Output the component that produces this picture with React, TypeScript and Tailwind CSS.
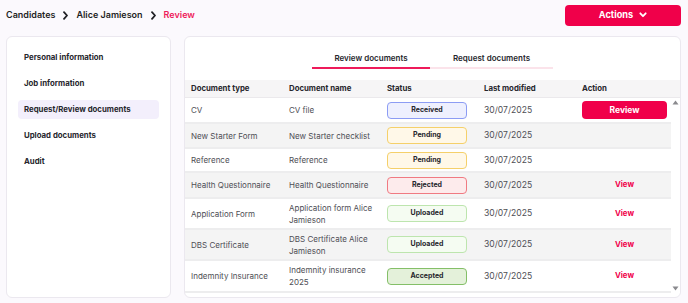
import React from 'react';

type Status = 'Received' | 'Pending' | 'Rejected' | 'Uploaded' | 'Accepted';

const statusStyles: Record<Status, string> = {
  Received: 'bg-[#eef0fe] border-[#8c9cf4]',
  Pending: 'bg-[#fff8e8] border-[#f5d06a]',
  Rejected: 'bg-[#fdebec] border-[#f07a82]',
  Uploaded: 'bg-[#f5fcf2] border-[#bde5ae]',
  Accepted: 'bg-[#e4f1da] border-[#84bf68]',
};

const rows: { type: string; name: string; status: Status; action: 'review' | 'view' | null; h: string; alt: boolean }[] = [
  { type: 'CV', name: 'CV file', status: 'Received', action: 'review', h: 'h-[26px]', alt: false },
  { type: 'New Starter Form', name: 'New Starter checklist', status: 'Pending', action: null, h: 'h-[25px]', alt: true },
  { type: 'Reference', name: 'Reference', status: 'Pending', action: null, h: 'h-[24px]', alt: false },
  { type: 'Health Questionnaire', name: 'Health Questionnaire', status: 'Rejected', action: 'view', h: 'h-[26px]', alt: true },
  { type: 'Application Form', name: 'Application form Alice Jamieson', status: 'Uploaded', action: 'view', h: 'h-[31px]', alt: false },
  { type: 'DBS Certificate', name: 'DBS Certificate Alice Jamieson', status: 'Uploaded', action: 'view', h: 'h-[31px]', alt: true },
  { type: 'Indemnity Insurance', name: 'Indemnity insurance 2025', status: 'Accepted', action: 'view', h: 'h-[32px]', alt: false },
];

const menu = ['Personal information', 'Job information', 'Request/Review documents', 'Upload documents', 'Audit'];

const Chevron = () => (
  <svg width="7" height="9" viewBox="0 0 7 9" className="mx-[7px]">
    <path d="M2 1.2 L5 4.5 L2 7.8" stroke="#1f1f24" strokeWidth="1.8" fill="none" strokeLinecap="round" strokeLinejoin="round" />
  </svg>
);

const App: React.FC = () => {
  return (
    <div className="w-[688px] h-[303px] overflow-hidden bg-[#fbf9fd] text-[#2a2a30]" style={{ fontFamily: 'Inter, "Noto Sans", sans-serif' }}>
      {/* Header */}
      <div className="h-[30px] flex items-center justify-between pl-[6px] pr-[7px]">
        <div className="flex items-center text-[9px] font-semibold">
          <span className="text-[#1f1f24]">Candidates</span>
          <Chevron />
          <span className="text-[#1f1f24]">Alice Jamieson</span>
          <Chevron />
          <span className="text-[#ee1a5a]">Review</span>
        </div>
        <button className="w-[116px] h-[21px] rounded-[4px] bg-[#f0004a] text-white text-[9.2px] font-bold flex items-center justify-center gap-[6px]">
          Actions
          <svg width="8" height="6" viewBox="0 0 8 6">
            <path d="M1.3 1.3 L4 4.2 L6.7 1.3" stroke="white" strokeWidth="1.8" fill="none" strokeLinecap="round" strokeLinejoin="round" />
          </svg>
        </button>
      </div>

      {/* Main */}
      <div className="flex gap-[13px] pl-[6px] pt-[6px]">
        {/* Sidebar */}
        <div className="w-[165px] h-[262px] bg-white border border-[#ebe8ef] rounded-[6px] pt-[11px] px-[11px] flex flex-col gap-[7px]">
          {menu.map((m) => (
            <div
              key={m}
              className={`h-[19px] flex items-center pl-[6px] rounded-[4px] text-[7.8px] font-bold text-[#26262c] ${m === 'Request/Review documents' ? 'bg-[#f3effc]' : ''}`}
            >
              {m}
            </div>
          ))}
        </div>

        {/* Content card */}
        <div className="w-[497px] h-[262px] bg-white border border-[#ebe8ef] rounded-[6px] overflow-hidden flex flex-col">
          {/* Tabs */}
          <div className="flex justify-center pt-[15px] h-[43px]">
            <div className="w-[118px] h-[17px] flex items-start justify-center text-[8px] font-semibold text-[#26262c] border-b-2 border-[#ee1a5a]">
              Review documents
            </div>
            <div className="w-[123px] h-[17px] flex items-start justify-center text-[8px] font-semibold text-[#26262c] border-b-2 border-[#fbe3ea]">
              Request documents
            </div>
          </div>

          {/* Table */}
          <div className="flex flex-col text-[8px]">
            <div className="h-[18px] bg-[#f6f5f6] border-b border-[#ebe9ec] flex items-center font-bold text-[7.8px] text-[#26262c]">
              <div className="w-[104px] pl-[6px]">Document type</div>
              <div className="w-[98px]">Document name</div>
              <div className="w-[97px]">Status</div>
              <div className="w-[98px]">Last modified</div>
              <div className="flex-1">Action</div>
            </div>
            <div className="flex">
              <div className="w-[488px] flex flex-col">
                {rows.map((r) => (
                  <div
                    key={r.type}
                    className={`${r.h} flex items-center border-b-2 border-[#ededee] text-[#4e4e54] ${r.alt ? 'bg-[#f4f4f4]' : 'bg-white'}`}
                  >
                    <div className="w-[104px] pl-[6px]">{r.type}</div>
                    <div className="w-[98px] pr-[14px] leading-[12px]">{r.name}</div>
                    <div className="w-[97px]">
                      <div className={`w-[80px] h-[17px] rounded-[4px] border-[1.5px] flex items-center justify-center text-[7px] font-bold text-[#26262c] ${statusStyles[r.status]}`}>
                        {r.status}
                      </div>
                    </div>
                    <div className="w-[98px] text-[8.6px]">30/07/2025</div>
                    <div className="w-[85px] flex justify-center">
                      {r.action === 'review' && (
                        <button className="w-[85px] h-[18px] rounded-[4px] bg-[#f0004a] text-white text-[8.5px] font-bold">
                          Review
                        </button>
                      )}
                      {r.action === 'view' && <span className="text-[#f0004a] text-[7.8px] font-bold">View</span>}
                    </div>
                  </div>
                ))}
              </div>
              {/* Scrollbar */}
              <div className="w-[9px] flex flex-col justify-between items-center py-[2px] bg-white">
                <svg width="7" height="5" viewBox="0 0 7 5"><path d="M3.5 0.5 L6.5 4.5 L0.5 4.5 Z" fill="#8a8a8e" /></svg>
                <svg width="7" height="5" viewBox="0 0 7 5"><path d="M0.5 0.5 L6.5 0.5 L3.5 4.5 Z" fill="#8a8a8e" /></svg>
              </div>
            </div>
          </div>
        </div>
      </div>
    </div>
  );
};

export default App;
